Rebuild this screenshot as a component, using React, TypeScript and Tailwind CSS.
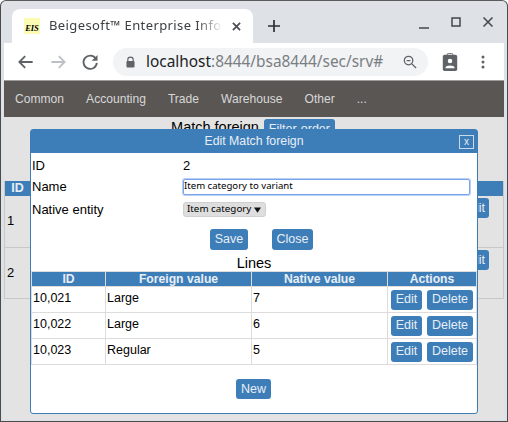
import React from "react";

const sans = "font-['Liberation_Sans',sans-serif]";
const Btn = ({ children, className = "" }: { children: React.ReactNode; className?: string }) => (
  <button className={`bg-[#3d7eb9] text-[#e8eef5] rounded-[3px] text-[12.500px] leading-none flex items-center justify-center ${className}`}>{children}</button>
);

const rows = [
  ["10,021", "Large", "7"],
  ["10,022", "Large", "6"],
  ["10,023", "Regular", "5"],
];

export default function App() {
  return (
    <div className={`relative w-[508px] h-[422px] overflow-hidden bg-[#dee1e6] rounded-t-[6px] border border-[#4a4a4a] border-t-[#5a5a5a] ${sans}`}>
      {/* tab strip */}
      <div className="h-[42px] flex pl-[11px] relative">
        <div className="mt-[8px] w-[241px] h-[34px] bg-white rounded-t-[8px] flex items-center pl-[12px]">
          <div className="w-[16px] h-[16px] bg-[#fbfbb4] flex items-end justify-center text-[8.500px] font-['Liberation_Serif',serif] italic font-bold text-black leading-[11px]">EIS</div>
          <span className="ml-[9px] w-[174px] overflow-hidden whitespace-nowrap text-[13px] text-[#3c4043] font-['Noto_Sans',sans-serif] tracking-[0.4px] [mask-image:linear-gradient(to_right,black_85%,transparent)]">Beigesoft™ Enterprise Info</span>
          <svg width="9" height="9" viewBox="0 0 10 10" className="ml-[9px]"><path d="M1 1l8 8M9 1l-8 8" stroke="#4a4d51" strokeWidth="1.900" /></svg>
        </div>
        <svg width="14" height="14" viewBox="0 0 14 14" className="ml-[14px] mt-[18px]"><path d="M7 1v12M1 7h12" stroke="#2d2f31" strokeWidth="1.700" /></svg>
        <div className="ml-auto flex items-center gap-[22px] h-[42px] pr-[14px]">
          <svg width="10" height="10" viewBox="0 0 10 10" className="mt-[3px]"><path d="M0 9h10" stroke="#44474a" strokeWidth="1.500" /></svg>
          <svg width="10" height="10" viewBox="0 0 10 10"><rect x="1" y="1" width="8" height="8" fill="none" stroke="#44474a" strokeWidth="1.500" /></svg>
          <svg width="10" height="10" viewBox="0 0 10 10"><path d="M.5.5l9 9M9.500.5l-9 9" stroke="#44474a" strokeWidth="1.500" /></svg>
        </div>
      </div>

      {/* toolbar */}
      <div className="h-[38px] bg-white flex items-center mx-[3px] pl-[12px] pr-[19px] border-b border-[#9b9b9b]">
        <svg width="20" height="20" viewBox="0 0 24 24"><path d="M20 12H5M11 5l-7 7 7 7" fill="none" stroke="#5f6368" strokeWidth="2.200" /></svg>
        <svg width="20" height="20" viewBox="0 0 24 24" className="ml-[12px]"><path d="M4 12h15M13 5l7 7-7 7" fill="none" stroke="#bdc1c6" strokeWidth="2.200" /></svg>
        <svg width="20" height="20" viewBox="0 0 24 24" className="ml-[12px]"><path d="M19 8a8 8 0 1 0 1.200 5" fill="none" stroke="#5f6368" strokeWidth="2.200" /><path d="M21 3.500v7h-7z" fill="#5f6368" /></svg>
        <div className="ml-[13px] w-[315px] shrink-0 h-[28px] rounded-full bg-[#f1f3f4] flex items-center pl-[13px] pr-[11px]">
          <svg width="9" height="12" viewBox="0 0 10 12"><path d="M2 5V3.500a3 3 0 0 1 6 0V5" fill="none" stroke="#5f6368" strokeWidth="1.300" /><rect x="0.500" y="5" width="9" height="7" rx="1" fill="#5f6368" /></svg>
          <span className="ml-[11px] text-[15.400px] font-['Noto_Sans',sans-serif] whitespace-nowrap text-[#7a7e83]"><span className="text-[#202124]">localhost</span>:8444/bsa8444/sec/srv#</span>
          <svg width="15" height="15" viewBox="0 0 16 16" className="ml-auto"><circle cx="7" cy="7" r="4.500" fill="none" stroke="#5f6368" strokeWidth="1.400" /><path d="M10.500 10.500L15 15M5 7h4" stroke="#5f6368" strokeWidth="1.400" /></svg>
        </div>
        <svg width="16" height="18" viewBox="0 0 16 20" className="ml-[14px]"><rect y="2" width="16" height="18" rx="2" fill="#5f6368" /><rect x="5" y="0.500" width="6" height="4" rx="1" fill="none" stroke="#5f6368" /><circle cx="8" cy="9" r="2.500" fill="#fff" /><path d="M3 16c0-3 10-3 10 0v1H3z" fill="#fff" /></svg>
        <svg width="4" height="14" viewBox="0 0 4 14" className="ml-auto"><circle cx="2" cy="2" r="1.500" fill="#5f6368" /><circle cx="2" cy="7" r="1.500" fill="#5f6368" /><circle cx="2" cy="12" r="1.500" fill="#5f6368" /></svg>
      </div>

      {/* page */}
      <div className="relative mx-[3px] h-[338px] bg-[#e3e3e3] text-black">
        <nav className="h-[36px] bg-[#5a5654] flex items-center text-[12.100px] text-[#d8d8d8] pl-[11px]">
          <span className="mr-[22px]">Common</span>
          <span className="mr-[22px]">Accounting</span>
          <span className="mr-[22px]">Trade</span>
          <span className="mr-[22px]">Warehouse</span>
          <span className="mr-[22px]">Other</span>
          <span>...</span>
        </nav>

        {/* page behind dialog */}
        <div className="h-[64px] pt-[2px] flex justify-center gap-[5px] text-[14.500px]">
          <span className="h-[10px] leading-[17px] ml-[-2px] whitespace-nowrap">Match foreign</span>
          <Btn className="w-[71px] h-[20px]">Filter-order</Btn>
        </div>
        <div className="border-x border-b border-[#c8c8c8] text-[13px]">
          <div className="h-[15px] bg-[#3d7eb9] text-[#e8eef5] flex">
            <span className="w-[25px] text-center font-bold text-[12.500px] leading-[15px]">ID</span>
          </div>
          <div className="relative h-[52px] border-b border-[#c8c8c8] flex items-start justify-between pl-[2px] pr-[14px] pt-[2px]">
            <span className="mt-[13px]">1</span>
            <Btn className="w-[35px] h-[20px] justify-end pr-[4px]">Edit</Btn>
          </div>
          <div className="h-[50px] flex items-start justify-between pl-[2px] pr-[14px] pt-[2px]">
            <span className="mt-[13px]">2</span>
            <Btn className="w-[35px] h-[20px] justify-end pr-[4px]">Edit</Btn>
          </div>
        </div>

        {/* dialog */}
        <div className="absolute left-[26px] top-[48px] w-[448px] h-[285px] bg-white border border-[#3d7eb9] rounded-[3px] flex flex-col text-[13px]">
          <div className="h-[23px] bg-[#3d7eb9] flex items-center justify-center relative text-[12.300px] text-[#e8eef5]">
            Edit Match foreign
            <span className="absolute right-[3px] top-[5px] w-[15px] h-[14px] border border-[#c9d9ea] flex items-center justify-center text-[10px] leading-none">x</span>
          </div>
          <div className="grid grid-cols-[151px_1fr] pl-[1px] pr-[7px] mt-[2px]">
            <div className="h-[21px] flex items-center">ID</div>
            <div className="h-[21px] flex items-center">2</div>
            <div className="h-[21px] flex items-center">Name</div>
            <div className="h-[21px] flex items-center">
              <div className="w-full h-[16px] border border-[#7aa3ea] rounded-[2px] shadow-[0_0_0_1px_#b9cff5] text-[9.600px] font-['Noto_Sans',sans-serif] pl-[0px] flex items-center whitespace-nowrap">Item category to variant</div>
            </div>
            <div className="h-[25px] flex items-center">Native entity</div>
            <div className="h-[25px] flex items-center">
              <div className="w-[83px] h-[15px] bg-[#dedede] border border-[#cfcfcf] rounded-[3px] text-[9.800px] font-['Noto_Sans',sans-serif] whitespace-nowrap flex items-center pl-[3px] pr-[4px]">
                Item category
                <svg width="7" height="6" viewBox="0 0 8 6" className="ml-auto"><path d="M0 0h8L4 6z" fill="#111" /></svg>
              </div>
            </div>
          </div>
          <div className="flex justify-center gap-[24px] mt-[7px] ml-[15px]">
            <Btn className="w-[38px] h-[21px]">Save</Btn>
            <Btn className="w-[41px] h-[21px]">Close</Btn>
          </div>
          <div className="text-center text-[14.500px] leading-[15px] mt-[6px]">Lines</div>
          <table className="w-[446px] border-collapse table-fixed text-[12.500px]">
            <thead>
              <tr className="bg-[#3d7eb9] text-[#e8eef5] text-[12.200px] h-[15px] leading-[14px]">
                <th className="w-[74px] border border-[#dcdcdc] font-bold p-0">ID</th>
                <th className="w-[146px] border border-[#dcdcdc] font-bold p-0">Foreign value</th>
                <th className="w-[136px] border border-[#dcdcdc] font-bold p-0">Native value</th>
                <th className="border border-[#dcdcdc] font-bold p-0">Actions</th>
              </tr>
            </thead>
            <tbody>
              {rows.map((r) => (
                <tr key={r[0]} className="h-[26px]">
                  <td className="border border-[#dcdcdc] p-0 pl-[1px] pb-[2px]">{r[0]}</td>
                  <td className="border border-[#dcdcdc] p-0 pl-[1px] pb-[2px]">{r[1]}</td>
                  <td className="border border-[#dcdcdc] p-0 pl-[1px] pb-[2px]">{r[2]}</td>
                  <td className="border border-[#dcdcdc] p-0">
                    <div className="flex justify-end gap-[5px] pr-[3px]">
                      <Btn className="w-[31px] h-[20px]">Edit</Btn>
                      <Btn className="w-[46px] h-[20px]">Delete</Btn>
                    </div>
                  </td>
                </tr>
              ))}
            </tbody>
          </table>
          <div className="flex justify-center mt-[14px] ml-[-1px]">
            <Btn className="w-[35px] h-[20px]">New</Btn>
          </div>
        </div>
      </div>
    </div>
  );
}
